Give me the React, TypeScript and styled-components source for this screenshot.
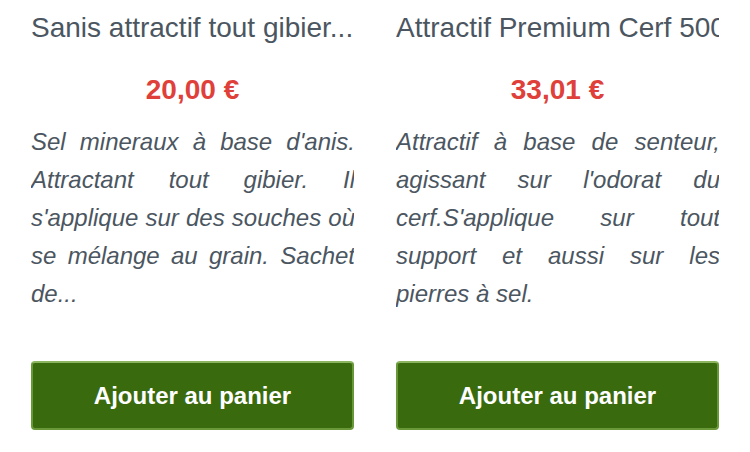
import styled, { createGlobalStyle } from "styled-components";

const GlobalStyle = createGlobalStyle`
  body {
    margin: 0;
    background: #ffffff;
    font-family: "Liberation Sans", Arial, sans-serif;
  }
`;

const products = [
  {
    id: "sanis",
    name: "Sanis attractif tout gibier...",
    price: "20,00 €",
    description:
      "Sel mineraux à base d'anis. Attractant tout gibier. Il s'applique sur des souches où se mélange au grain. Sachet de...",
  },
  {
    id: "premium",
    name: "Attractif Premium Cerf 500 ml",
    price: "33,01 €",
    description:
      "Attractif à base de senteur, agissant sur l'odorat du cerf.S'applique sur tout support et aussi sur les pierres à sel.",
  },
];

export default function App() {
  return (
    <>
      <GlobalStyle />
      <ProductList>
        {products.map((product) => (
          <Card key={`product-${product.id}`}>
            <Title>{product.name}</Title>
            <Price>{product.price}</Price>
            <Description>{product.description}</Description>
            <CartButton type="button">Ajouter au panier</CartButton>
          </Card>
        ))}
      </ProductList>
    </>
  );
}

const ProductList = styled.section`
  display: flex;
  gap: 42px;
  padding: 12px 0 0 31px;
  width: 750px;
  height: 452px;
  box-sizing: border-box;
  overflow: hidden;
`;

const Card = styled.article`
  flex: 0 0 323px;
  display: flex;
  flex-direction: column;
  overflow: hidden;
`;

const Title = styled.h3`
  margin: 0;
  font-size: 28px;
  line-height: 32px;
  font-weight: 400;
  color: #4b5661;
  white-space: nowrap;
  overflow: hidden;
`;

const Price = styled.div`
  margin-top: 30px;
  font-size: 28px;
  line-height: 32px;
  font-weight: 700;
  color: #e0403a;
  text-align: center;
`;

const Description = styled.p`
  margin: 17px -1px 0 0;
  height: 190px;
  font-size: 24px;
  line-height: 38px;
  font-style: italic;
  color: #4b5661;
  text-align: justify;
`;

const CartButton = styled.button`
  margin-top: 48px;
  width: 323px;
  height: 69px;
  box-sizing: border-box;
  border: 2px solid #689838;
  border-top-color: #8cb560;
  border-radius: 4px;
  background: #3a6a0e;
  color: #ffffff;
  font-family: "Liberation Sans", Arial, sans-serif;
  font-size: 24px;
  font-weight: 700;
  cursor: pointer;
`;
